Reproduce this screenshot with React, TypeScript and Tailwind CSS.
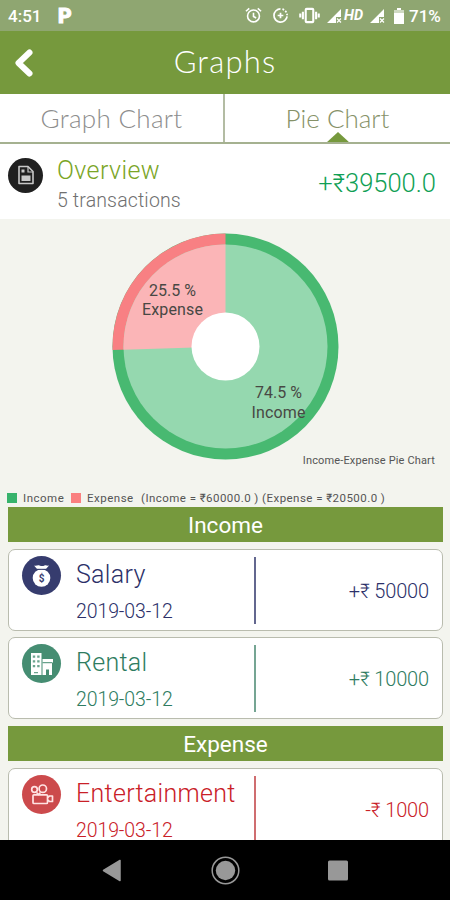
import type { ReactNode } from 'react';
import clsx from 'clsx';

type Entry = {
  title: string;
  date: string;
  amount: string;
  text: string;
  badge: string;
  line: string;
  icon: ReactNode;
};

function MoneyBagIcon() {
  return (
    <svg viewBox="0 0 39 39" className="size-[39px]" aria-hidden="true">
      <path d="M12 9.500c2.500.7 3.500-.7 5.500 0s3.500.7 5 0 2.500.5 4.500 0l-3 3.500h-9z" fill="#fff" />
      <circle cx="19.500" cy="22" r="8.800" fill="#fff" />
      <path d="M13.500 13.300h12" stroke="#363c6e" strokeWidth="1" />
      <text x="19.500" y="25.500" textAnchor="middle" fill="#363c6e" className="font-['Roboto',sans-serif] text-[10px] font-bold">$</text>
    </svg>
  );
}

function BuildingIcon() {
  return (
    <svg viewBox="0 0 39 39" className="size-[39px]" aria-hidden="true">
      <path d="M9 9h10.500v22H9z" fill="#fff" />
      <path d="M10.800 11.500h2.400v2.200h-2.400zM15.200 11.500h2.400v2.200h-2.400zM10.800 16.300h2.400v2.200h-2.400zM15.200 16.300h2.400v2.200h-2.400zM10.800 21.100h2.400v2.200h-2.400zM15.200 21.100h2.400v2.200h-2.400zM12 28h4v1.200h-4z" fill="#6ca58f" />
      <path d="M20.500 15H31v3.500h-1V31h-3v-5.500h-3V31h-3.500z" fill="#fff" />
      <path d="M20.500 18.700H30" stroke="#458d72" strokeWidth="1" />
    </svg>
  );
}

function CameraIcon() {
  return (
    <svg viewBox="0 0 39 39" className="size-[39px]" fill="none" stroke="#ffe3e3" strokeWidth="1.700" aria-hidden="true">
      <circle cx="12.500" cy="14.500" r="2.800" />
      <circle cx="20.800" cy="13.700" r="3.700" />
      <rect x="11" y="19.800" width="14.500" height="8.700" rx="1" />
      <path d="M14.500 17.500l2 2 2-2M25.500 22.500l2-1.500h3v5.500h-3l-2-1.500" strokeLinejoin="round" />
    </svg>
  );
}

const income: Entry[] = [
  {
    title: 'Salary',
    date: '2019-03-12',
    amount: '+₹ 50000',
    text: 'text-[#2c3069]',
    badge: 'bg-[#363c6e]',
    line: 'bg-[#63678f]',
    icon: <MoneyBagIcon />,
  },
  {
    title: 'Rental',
    date: '2019-03-12',
    amount: '+₹ 10000',
    text: 'text-[#2e7c61]',
    badge: 'bg-[#458d72]',
    line: 'bg-[#75a593]',
    icon: <BuildingIcon />,
  },
];

const expense: Entry[] = [
  {
    title: 'Entertainment',
    date: '2019-03-12',
    amount: '-₹ 1000',
    text: 'text-[#c92027]',
    badge: 'bg-[#cc4a4c]',
    line: 'bg-[#cf6d70]',
    icon: <CameraIcon />,
  },
];

function SignalIcon() {
  return (
    <svg viewBox="0 0 16 16" className="size-4" aria-hidden="true">
      <path d="M1 15L15 1v8h-5v6z" fill="#fff" />
      <path d="M11 10.500l4 4m0-4l-4 4" stroke="#fff" strokeWidth="1.200" />
    </svg>
  );
}

function StatusBar() {
  return (
    <div className="flex h-[31px] shrink-0 items-center bg-[#8fa671] pl-2 pr-[7px] text-white">
      <span className="w-[33px] pt-[2px] text-[17px] font-medium leading-none">4:51</span>
      <span className="ml-[17px] pt-[2px] text-[21px] font-black leading-none [-webkit-text-stroke:1px_white]">P</span>
      <div className="ml-auto flex items-center">
        <svg viewBox="0 0 18 18" className="size-[17px]" fill="none" stroke="#fff" strokeWidth="1.700" aria-hidden="true">
          <circle cx="9" cy="9.500" r="6.300" />
          <path d="M9 6v4l2.800 1.600M1 4.500L4.500 1.500M17 4.500l-3.500-3" />
        </svg>
        <svg viewBox="0 0 18 18" className="ml-[10px] size-[17px]" fill="none" stroke="#fff" strokeWidth="1.800" aria-hidden="true">
          <path d="M9 2a7 7 0 1 0 7 8" />
          <path d="M11 2.300a7 7 0 0 1 5 6.500" strokeDasharray="2 1.500" />
          <path d="M9 6v6M6 9h6" />
        </svg>
        <svg viewBox="0 0 22 18" className="ml-[10px] h-[17px] w-[21px]" fill="none" stroke="#fff" strokeWidth="2.200" aria-hidden="true">
          <rect x="7" y="2" width="8" height="14" rx="1" />
          <path d="M4 5v8M18 5v8M1.200 7v4M20.800 7v4" />
        </svg>
        <span className="ml-[6px]"><SignalIcon /></span>
        <span className="ml-[2px] w-[20px] pt-[2px] text-[14.500px] font-bold italic leading-none">HD</span>
        <span className="ml-[5px]"><SignalIcon /></span>
        <svg viewBox="0 0 12 16" className="ml-[8px] h-4 w-3" aria-hidden="true">
          <path d="M4 0h4v2h3v14H1V2h3z" fill="#fff" />
          <path d="M1 2h10v3H1z" fill="#d0dac3" />
        </svg>
        <span className="ml-[4px] w-[34px] whitespace-nowrap pt-[2px] text-[17px] font-medium leading-none">71%</span>
      </div>
    </div>
  );
}

function Header() {
  return (
    <header className="grid h-[63px] shrink-0 grid-cols-[60px_1fr_60px] items-center bg-[#76993d]">
      <svg viewBox="0 0 20 30" className="ml-[14px] h-[30px] w-5" fill="none" stroke="#fff" strokeWidth="6" strokeLinecap="round" strokeLinejoin="round" aria-label="Back">
        <path d="M15.500 4.500L4.500 15l11 10.500" />
      </svg>
      <h1 className="-mt-[3px] text-center font-['Lato',sans-serif] text-[31px] font-light leading-none tracking-[1.200px] text-white">Graphs</h1>
    </header>
  );
}

function Tabs() {
  return (
    <nav className="grid h-[50px] shrink-0 grid-cols-2 border-b-2 border-[#a5b190] bg-white text-center font-['Lato',sans-serif] text-[26px] font-light leading-[48px]">
      <div className="border-r-2 border-[#b3bca3] tracking-[0.300px] text-[#8d8d8d]">Graph Chart</div>
      <div className="relative text-[#869168]">
        Pie Chart
        <svg viewBox="0 0 24 11" className="absolute bottom-0 left-[101px] h-[10px] w-6" aria-hidden="true">
          <path d="M0 11L12 0l12 11z" fill="#76993d" />
        </svg>
      </div>
    </nav>
  );
}

function Overview() {
  return (
    <section className="flex h-[75px] shrink-0 items-center bg-white pl-2 pr-[14px]">
      <div className="mb-[13px] flex size-[35px] items-center justify-center rounded-full bg-[#202020]">
        <svg viewBox="0 0 18 20" className="h-5 w-[18px]" aria-hidden="true">
          <path d="M2 1.500h9l5 5v12H2z" fill="none" stroke="#c8c8c8" strokeWidth="1.600" strokeLinejoin="round" />
          <path d="M4.500 10.500h9v5.500h-9zM4.500 4.500h3v3h-3z" fill="#c8c8c8" />
          <path d="M11 2v5h5" fill="none" stroke="#c8c8c8" strokeWidth="1.200" />
        </svg>
      </div>
      <div className="ml-[14px] pt-[8px]">
        <h2 className="text-[25px] font-light leading-[30px] tracking-[0.400px] text-[#7aa526]">Overview</h2>
        <p className="text-[19.500px] font-light leading-[30px] tracking-[0.150px] text-[#707070]">5 transactions</p>
      </div>
      <span className="ml-auto pt-[4px] text-[25.500px] font-light leading-none text-[#109f55]">+₹39500.0</span>
    </section>
  );
}

function PieChart() {
  return (
    <section className="flex h-[288px] shrink-0 flex-col">
      <svg viewBox="0 0 450 232" className="h-[232px] w-full shrink-0 overflow-visible" aria-label="Income-Expense Pie Chart">
        <circle cx="225.500" cy="127.500" r="113" fill="#48b971" />
        <path d="M225.500 127.500L112.560 131.050A113 113 0 0 1 225.500 14.500z" fill="#f88083" />
        <circle cx="225.500" cy="127.500" r="102" fill="#95d8af" />
        <path d="M225.500 127.500L123.550 130.700A102 102 0 0 1 225.500 25.500z" fill="#fbb5b7" />
        <circle cx="225.500" cy="127.500" r="34" fill="#fff" />
        <g textAnchor="middle" fill="#484844" className="text-[16px]">
          <text x="172.500" y="76.500" textLength="47">25.5 %</text>
          <text x="172.500" y="96" textLength="61">Expense</text>
          <text x="278.500" y="179" textLength="47">74.5 %</text>
          <text x="278.500" y="198.500" textLength="54">Income</text>
        </g>
      </svg>
      <p className="pr-[15px] text-right text-[11px] leading-[19px] tracking-[0.150px] text-[#555]">Income-Expense Pie Chart</p>
      <div className="mt-[19px] flex items-center whitespace-nowrap pl-[7px] text-[11.500px] leading-[18px] text-[#555]">
        <span className="size-[10px] bg-[#37b36c]" />
        <span className="ml-[6px] w-[42px] tracking-[0.500px]">Income</span>
        <span className="ml-[6px] size-[10px] bg-[#fa8080]" />
        <span className="ml-[6px] w-[54px] tracking-[0.500px]">Expense</span>
        <span className="tracking-[0.450px]">(Income = ₹60000.0 ) (Expense = ₹20500.0 )</span>
      </div>
    </section>
  );
}

function SectionBar({ children }: { children: ReactNode }) {
  return <h3 className="h-[35px] shrink-0 bg-[#76993d] text-center text-[22.500px] leading-[37px] text-white">{children}</h3>;
}

function EntryCard({ entry }: { entry: Entry }) {
  return (
    <article className={clsx('flex h-[82px] shrink-0 rounded-[7px] border border-[#b9bcae] bg-white pl-[13px] pr-[13px]', entry.text)}>
      <div className={clsx('mt-[6px] size-[39px] rounded-full', entry.badge)}>{entry.icon}</div>
      <div className="ml-[15px] w-[178px] pt-[9px]">
        <h4 className="text-[25px] font-light leading-[32px] tracking-[0.300px]">{entry.title}</h4>
        <p className="mt-[11px] text-[19.500px] font-light leading-[19px] tracking-[-0.100px]">{entry.date}</p>
      </div>
      <div className={clsx('mt-[7px] h-[67px] w-[2px]', entry.line)} />
      <span className="ml-auto self-center pt-[2px] text-[20px] font-light leading-none tracking-[-0.150px]">{entry.amount}</span>
    </article>
  );
}

function NavigationBar() {
  return (
    <div className="flex h-[60px] shrink-0 items-center justify-center bg-black">
      <svg viewBox="0 0 450 60" className="h-[60px] w-full" aria-hidden="true">
        <path d="M103.500 30.500L120 20.500v20z" fill="#989898" stroke="#989898" strokeWidth="1.500" strokeLinejoin="round" />
        <circle cx="225.500" cy="30.500" r="13.300" fill="none" stroke="#989898" strokeWidth="1.500" />
        <circle cx="225.500" cy="30.500" r="9.700" fill="#989898" />
        <rect x="328" y="20.500" width="20" height="20" rx="1.500" fill="#989898" />
      </svg>
    </div>
  );
}

export default function App() {
  return (
    <div className="flex h-[900px] w-[450px] flex-col overflow-hidden bg-[#f3f4ee] font-['Roboto',sans-serif]">
      <StatusBar />
      <Header />
      <Tabs />
      <Overview />
      <PieChart />
      <main className="flex min-h-0 flex-1 flex-col overflow-hidden pl-2 pr-[7px]">
        <SectionBar>Income</SectionBar>
        <div className="flex shrink-0 flex-col gap-[6px] py-[7px]">
          {income.map((entry) => (
            <EntryCard key={entry.title} entry={entry} />
          ))}
        </div>
        <SectionBar>Expense</SectionBar>
        <div className="flex shrink-0 flex-col gap-[6px] py-[7px]">
          {expense.map((entry) => (
            <EntryCard key={entry.title} entry={entry} />
          ))}
        </div>
      </main>
      <NavigationBar />
    </div>
  );
}
